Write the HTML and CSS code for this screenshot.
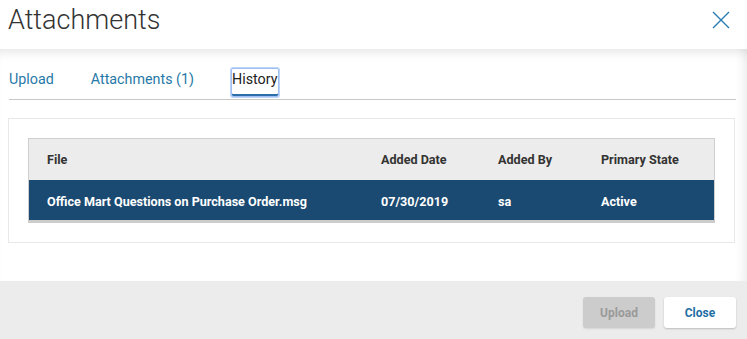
FILE: index.html
```html
<!DOCTYPE html>
<html lang="en">
<head>
    <meta charset="UTF-8">
    <title>Attachments</title>
    <link rel="stylesheet" href="styles.css">
</head>
<body>
    <div class="modal">
        <div class="modal-header">
            <h1 class="modal-title">Attachments</h1>
            <button class="close-x" aria-label="Close">
                <svg width="18" height="18" viewBox="0 0 18 18">
                    <path d="M1 1 L17 17 M17 1 L1 17" stroke="#2b7cb3" stroke-width="1.4" fill="none"/>
                </svg>
            </button>
        </div>

        <div class="modal-body">
            <div class="tabs">
                <a class="tab">Upload</a>
                <a class="tab">Attachments (1)</a>
                <a class="tab active">History</a>
            </div>

            <div class="panel">
                <table class="grid">
                    <thead>
                        <tr>
                            <th class="col-file">File</th>
                            <th class="col-date">Added Date</th>
                            <th class="col-by">Added By</th>
                            <th class="col-state">Primary State</th>
                        </tr>
                    </thead>
                    <tbody>
                        <tr class="selected">
                            <td>Office Mart Questions on Purchase Order.msg</td>
                            <td>07/30/2019</td>
                            <td>sa</td>
                            <td>Active</td>
                        </tr>
                    </tbody>
                </table>
            </div>
        </div>

        <div class="modal-footer">
            <button class="btn btn-disabled" disabled>Upload</button>
            <button class="btn btn-close">Close</button>
        </div>
    </div>
</body>
</html>
```

FILE: styles.css
```css
body {
    margin: 0;
    font-family: Roboto, "Liberation Sans", sans-serif;
    background-color: #fff;
}

.modal {
    width: 747px;
    height: 339px;
    display: flex;
    flex-direction: column;
}

.modal-header {
    height: 49px;
    display: flex;
    align-items: flex-start;
    justify-content: space-between;
    padding: 0 17px 0 8px;
    box-sizing: border-box;
}

.modal-title {
    margin: 0;
    font-size: 27px;
    font-weight: 300;
    color: #333;
    line-height: 38px;
    padding-top: 1px;
}

.close-x {
    background: none;
    border: none;
    padding: 0;
    margin-top: 11px;
    width: 18px;
    height: 18px;
    cursor: pointer;
}

.modal-body {
    flex: 1;
    padding: 0 11px 0 8px;
    box-shadow: inset 0 10px 10px -6px rgba(0, 0, 0, 0.09), inset -10px 0 10px -6px rgba(0, 0, 0, 0.07);
}

.tabs {
    display: flex;
    margin-top: 19px;
    margin-left: 1px;
    border-bottom: 1px solid #c8c8c8;
    height: 31px;
}

.tab {
    font-size: 14.3px;
    color: #2779a7;
    line-height: 20px;
    padding-top: 1px;
    margin-right: 37px;
    cursor: pointer;
}

.tab.active {
    color: #222;
    margin-left: 0;
    padding: 0;
    height: 29px;
    box-sizing: border-box;
    line-height: 20px;
    border: 1px solid #9ec0f5;
    border-radius: 2px;
    box-shadow: 0 0 0 1px #bcd4f8, inset 0 -2px 0 #2c6ea8;
}

.panel {
    margin-top: 18px;
    border: 1px solid #e8e8e8;
    padding: 19px;
    width: 727px;
    box-sizing: border-box;
    background-color: #fff;
}

.grid {
    width: 100%;
    border-collapse: collapse;
    border: 1px solid #cfcfcf;
    border-bottom: 3px solid #cccccc;
    font-size: 12.6px;
    font-weight: bold;
}

.grid th {
    background-color: #ececec;
    color: #333;
    text-align: left;
    height: 41px;
    padding: 0 0 0 18px;
    font-weight: bold;
}

.grid td {
    height: 38px;
    padding: 2px 0 0 18px;
}

.selected td {
    background-color: #1a4a71;
    color: #fff;
}

.col-file { width: 316px; }
.col-date { width: 99px; }
.col-by { width: 85px; }

.modal-footer {
    height: 58px;
    background-color: #ececec;
    display: flex;
    justify-content: flex-end;
    align-items: flex-start;
    gap: 9px;
    padding: 16px 11px 0 0;
    box-sizing: border-box;
}

.btn {
    width: 72px;
    height: 31px;
    border: none;
    border-radius: 3px;
    font-family: Roboto, "Liberation Sans", sans-serif;
    font-size: 12px;
    font-weight: bold;
    cursor: pointer;
}

.btn-disabled {
    background-color: #cccccc;
    color: #9a9a9a;
    box-shadow: 0 1px 2px rgba(0, 0, 0, 0.1);
}

.btn-close {
    background-color: #fff;
    color: #1f6fa5;
    box-shadow: 0 1px 2px rgba(0, 0, 0, 0.2);
}
```
